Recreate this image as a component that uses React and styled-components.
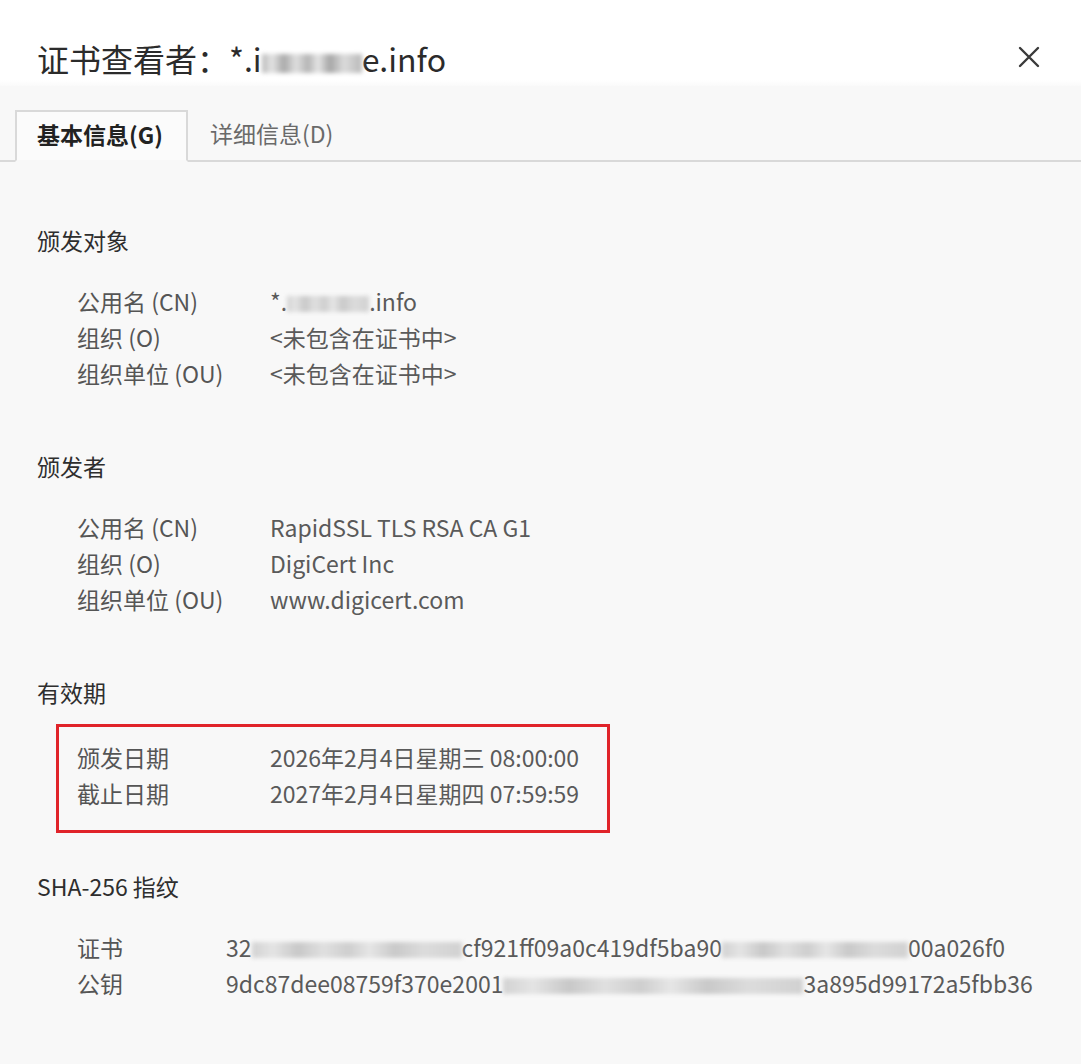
import React from "react";
import styled, { createGlobalStyle } from "styled-components";

const Global = createGlobalStyle`
  html, body { margin: 0; padding: 0; background: #f8f8f8; }
  body { font-family: "Noto Sans CJK SC", "Open Sans", sans-serif; }
`;

const Dialog = styled.div`
  width: 1081px;
  height: 1064px;
  background: #f8f8f8;
  display: flex;
  flex-direction: column;
  overflow: hidden;
`;

const TitleBar = styled.div`
  height: 86px;
  display: flex;
  align-items: center;
  justify-content: space-between;
  padding: 30px 41px 0 37px;
  box-sizing: border-box;
  background: linear-gradient(#ffffff 0 80px, #fafafa 86px);
`;

const Title = styled.h1`
  margin: 0;
  font-size: 32px;
  line-height: 52px;
  font-weight: 400;
  color: #2b2b2b;
  white-space: nowrap;
`;

/* pixelated redaction blob, as in the screenshot */
const Redacted = styled.span`
  display: inline-block;
  width: ${(p) => p.$w}px;
  height: ${(p) => p.$h || 0.7}em;
  vertical-align: -0.04em;
  background: linear-gradient(
    90deg,
    ${(p) => (p.$dark ? "#b9b9b9" : "#d2d2d2")} 0%,
    #e4e4e4 10%,
    ${(p) => (p.$dark ? "#a9a9a9" : "#c8c8c8")} 22%,
    #e0e0e0 34%,
    ${(p) => (p.$dark ? "#b4b4b4" : "#cecece")} 46%,
    #e6e6e6 56%,
    ${(p) => (p.$dark ? "#a5a5a5" : "#c9c9c9")} 68%,
    #dcdcdc 82%,
    ${(p) => (p.$dark ? "#b8b8b8" : "#d1d1d1")} 100%
  );
  filter: blur(2px);
`;

const Close = styled.button`
  border: none;
  background: none;
  padding: 0;
  width: 22px;
  height: 22px;
  margin-bottom: 2px;
  cursor: pointer;
  display: flex;
`;

const TabBar = styled.div`
  display: flex;
  align-items: flex-end;
  height: 76px;
  padding-left: 15px;
  border-bottom: 2px solid #d9d9d9;
  box-sizing: border-box;
`;

const Tab = styled.div`
  height: 52px;
  box-sizing: border-box;
  display: flex;
  align-items: center;
  font-size: 23px;
  margin-bottom: -2px;
  white-space: nowrap;
  ${(p) =>
    p.$active
      ? `
    padding: 0 0 4px 20px;
    border: 2px solid #d9d9d9;
    border-bottom: 2px solid #f8f8f8;
    background: #fbfbfb;
    color: #222;
    font-weight: 700;
    width: 173px;
  `
      : `
    padding: 0 22px 4px 22px;
    color: #6a6a6a;
    border-bottom: 2px solid transparent;
  `}
`;

const Content = styled.div`
  padding: 60px 0 0 37px;
  display: flex;
  flex-direction: column;
`;

const Section = styled.section`
  display: flex;
  flex-direction: column;
  margin-bottom: 57px;
`;

const SectionTitle = styled.div`
  font-size: 23px;
  color: #2e2e2e;
  line-height: 36px;
  margin-bottom: 25px;
`;

const Rows = styled.div`
  display: flex;
  flex-direction: column;
  padding-left: 40px;
`;

const Highlight = styled.div`
  display: flex;
  flex-direction: column;
  margin: -11px 0 -22px 19px;
  width: 554px;
  box-sizing: border-box;
  padding: 12px 0 19px 18px;
  border: 3px solid #e0232a;
`;

const Row = styled.div`
  display: flex;
  font-size: 23px;
  line-height: 36px;
  color: #555;
  white-space: nowrap;
`;

const Label = styled.div`
  width: ${(p) => p.$w}px;
  flex-shrink: 0;
`;

const Value = styled.div`
  color: #5a5a5a;
`;

function X() {
  return (
    <svg width="22" height="22" viewBox="0 0 22 22">
      <path d="M2 2 L20 20 M20 2 L2 20" stroke="#3a3a3a" strokeWidth="2.4" strokeLinecap="round" />
    </svg>
  );
}

export default function App() {
  return (
    <>
      <Global />
      <Dialog>
        <TitleBar>
          <Title>
            证书查看者：*.i<Redacted $w={100} $h={0.6} $dark aria-hidden />e.info
          </Title>
          <Close aria-label="关闭"><X /></Close>
        </TitleBar>
        <TabBar>
          <Tab $active>基本信息(G)</Tab>
          <Tab>详细信息(D)</Tab>
        </TabBar>
        <Content>
          <Section>
            <SectionTitle>颁发对象</SectionTitle>
            <Rows>
              <Row><Label $w={193}>公用名 (CN)</Label><Value>*.<Redacted $w={82} aria-hidden />.info</Value></Row>
              <Row><Label $w={193}>组织 (O)</Label><Value>&lt;未包含在证书中&gt;</Value></Row>
              <Row><Label $w={193}>组织单位 (OU)</Label><Value>&lt;未包含在证书中&gt;</Value></Row>
            </Rows>
          </Section>
          <Section>
            <SectionTitle>颁发者</SectionTitle>
            <Rows>
              <Row><Label $w={193}>公用名 (CN)</Label><Value>RapidSSL TLS RSA CA G1</Value></Row>
              <Row><Label $w={193}>组织 (O)</Label><Value>DigiCert Inc</Value></Row>
              <Row><Label $w={193}>组织单位 (OU)</Label><Value>www.digicert.com</Value></Row>
            </Rows>
          </Section>
          <Section>
            <SectionTitle>有效期</SectionTitle>
            <Highlight>
              <Row><Label $w={193}>颁发日期</Label><Value>2026年2月4日星期三 08:00:00</Value></Row>
              <Row><Label $w={193}>截止日期</Label><Value>2027年2月4日星期四 07:59:59</Value></Row>
            </Highlight>
          </Section>
          <Section>
            <SectionTitle>SHA-256 指纹</SectionTitle>
            <Rows>
              <Row>
                <Label $w={149}>证书</Label>
                <Value>32<Redacted $w={210} aria-hidden />cf921ff09a0c419df5ba90<Redacted $w={186} aria-hidden />00a026f0</Value>
              </Row>
              <Row>
                <Label $w={149}>公钥</Label>
                <Value>9dc87dee08759f370e2001<Redacted $w={300} aria-hidden />3a895d99172a5fbb36</Value>
              </Row>
            </Rows>
          </Section>
        </Content>
      </Dialog>
    </>
  );
}
